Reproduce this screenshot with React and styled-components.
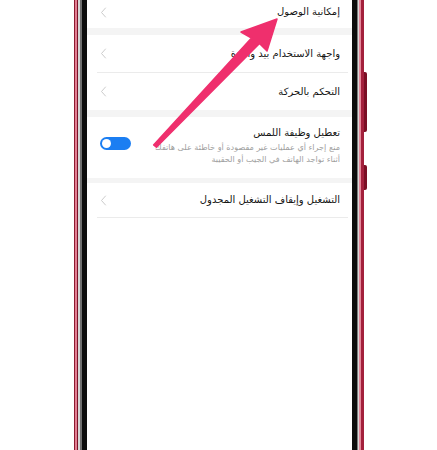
import React from "react";
import styled, { createGlobalStyle } from "styled-components";

const GlobalStyle = createGlobalStyle`
  html, body {
    margin: 0;
    padding: 0;
    background: #ffffff;
  }
`;

const Page = styled.div`
  position: relative;
  width: 437px;
  height: 450px;
  overflow: hidden;
  padding-left: 74px;
  box-sizing: border-box;
  background: #ffffff;
`;

// phone edge: red shell, pink rim, metal and black bezel drawn as hard stops
const Frame = styled.div`
  position: relative;
  width: 290px;
  height: 450px;
  box-sizing: border-box;
  padding: 0 12px 0 13px;
  display: flex;
  background: linear-gradient(
    to right,
    #8d1a30 0px,
    #8d1a30 1px,
    #e27f93 1px,
    #e27f93 3px,
    #7c1429 3px,
    #7c1429 4px,
    #d6d6d6 4px,
    #d6d6d6 6px,
    #6f6f6f 6px,
    #6f6f6f 8px,
    #0c0c0c 8px,
    #0c0c0c 283px,
    #7a7a7a 283px,
    #7a7a7a 284px,
    #d8d8d8 284px,
    #d8d8d8 285px,
    #e58a9c 285px,
    #e58a9c 287px,
    #a3203c 287px
  );
`;

const SideKey = styled.div`
  position: absolute;
  right: -3px;
  top: ${(p) => p.top}px;
  width: 3px;
  height: ${(p) => p.h}px;
  background: #7a0f25;
  border-radius: 0 2px 2px 0;
`;

const Screen = styled.div`
  width: 265px;
  background: #ffffff;
  display: flex;
  flex-direction: column;
  direction: rtl;
  font-family: "DejaVu Sans", "Noto Sans", sans-serif;
`;

const Row = styled.div`
  display: flex;
  align-items: ${(p) => (p.top ? "flex-start" : "center")};
  justify-content: space-between;
  height: ${(p) => p.h}px;
  box-sizing: border-box;
  padding: ${(p) => p.pt || 0}px 12px ${(p) => p.pb || 0}px 13px;
  background: #ffffff;
`;

const Band = styled.div`
  height: ${(p) => p.h}px;
  background: #f4f4f4;
`;

const Divider = styled.div`
  height: 1px;
  background: #ebebeb;
  margin-left: 10px;
  margin-right: 4px;
`;

const TextBlock = styled.div`
  display: flex;
  flex-direction: column;
`;

const Title = styled.div`
  font-size: 10px;
  line-height: 16px;
  color: #151515;
  white-space: nowrap;
`;

const Desc = styled.div`
  font-size: 8.1px;
  line-height: 12px;
  color: #a0a0a0;
  white-space: nowrap;
`;

const Chevron = styled.svg`
  width: 7px;
  height: 11px;
  flex: none;
`;

const Toggle = styled.div`
  direction: ltr;
  width: 31px;
  height: 13px;
  margin-top: 12px;
  border-radius: 7px;
  background: #1b7ef2;
  display: flex;
  align-items: center;
  padding: 0 2px;
  box-sizing: border-box;
  flex: none;
`;

const Knob = styled.div`
  width: 9px;
  height: 9px;
  border-radius: 50%;
  background: #ffffff;
`;

const Overlay = styled.svg`
  position: absolute;
  left: 0;
  top: 0;
  width: 437px;
  height: 450px;
  pointer-events: none;
`;

const Back = () => (
  <Chevron viewBox="0 0 7 11">
    <polyline
      points="5.5,1 1.5,5.5 5.5,10"
      fill="none"
      stroke="#cbcbcb"
      strokeWidth="1"
      strokeLinecap="round"
      strokeLinejoin="round"
    />
  </Chevron>
);

const App = () => {
  return (
    <>
      <GlobalStyle />
      <Page>
        <Frame>
          <SideKey top={72} h={60} />
          <SideKey top={165} h={25} />
          <Screen>
            <Row h={28} pb={4}>
              <Title>إمكانية الوصول</Title>
              <Back />
            </Row>
            <Band h={7} />
            <Row h={37}>
              <Title>واجهة الاستخدام بيد واحدة</Title>
              <Back />
            </Row>
            <Divider />
            <Row h={37}>
              <Title>التحكم بالحركة</Title>
              <Back />
            </Row>
            <Band h={7} />
            <Row h={61} top pt={8}>
              <TextBlock>
                <Title>تعطيل وظيفة اللمس</Title>
                <Desc>منع إجراء أي عمليات غير مقصودة أو خاطئة على هاتفك</Desc>
                <Desc>أثناء تواجد الهاتف في الجيب أو الحقيبة</Desc>
              </TextBlock>
              <Toggle>
                <Knob />
              </Toggle>
            </Row>
            <Band h={5} />
            <Row h={34}>
              <Title>التشغيل وإيقاف التشغيل المجدول</Title>
              <Back />
            </Row>
            <Divider />
          </Screen>
        </Frame>
        <Overlay viewBox="0 0 437 450">
          <path
            d="M153.6 145 L251.5 38 L241 32 L277 19 L267 51 L259.5 43.5 L156.4 147.2 Z"
            fill="#ef2f6d"
            stroke="#ef2f6d"
            strokeWidth="1.5"
            strokeLinejoin="round"
          />
        </Overlay>
      </Page>
    </>
  );
};

export default App;
